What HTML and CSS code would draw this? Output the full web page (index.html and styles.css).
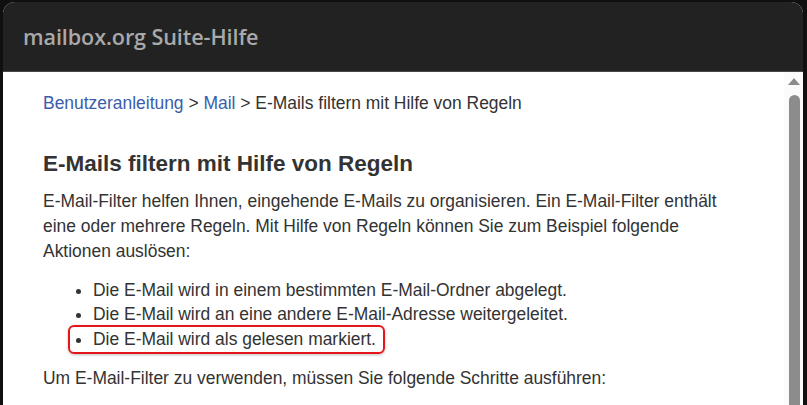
FILE: index.html
```html
<!DOCTYPE html>
<html lang="de">
<head>
<meta charset="utf-8">
<title>mailbox.org Suite-Hilfe</title>
<link rel="stylesheet" href="styles.css">
</head>
<body>
<div class="window">
  <header class="titlebar">mailbox.org Suite-Hilfe</header>
  <div class="body">
    <main class="content">
      <nav class="crumbs"><a href="#">Benutzeranleitung</a> &gt; <a href="#">Mail</a> &gt; E-Mails filtern mit Hilfe von Regeln</nav>
      <h1>E-Mails filtern mit Hilfe von Regeln</h1>
      <p>E-Mail-Filter helfen Ihnen, eingehende E-Mails zu organisieren. Ein E-Mail-Filter enthält eine oder mehrere Regeln. Mit Hilfe von Regeln können Sie zum Beispiel folgende Aktionen auslösen:</p>
      <ul>
        <li>Die E-Mail wird in einem bestimmten E-Mail-Ordner abgelegt.</li>
        <li>Die E-Mail wird an eine andere E-Mail-Adresse weitergeleitet.</li>
        <li class="marked">Die E-Mail wird als gelesen markiert.</li>
      </ul>
      <p>Um E-Mail-Filter zu verwenden, müssen Sie folgende Schritte ausführen:</p>
    </main>
    <div class="scrollbar">
      <div class="arrow"></div>
      <div class="thumb"></div>
    </div>
  </div>
</div>
</body>
</html>
```
FILE: styles.css
```css
html, body {
  margin: 0;
  padding: 0;
  height: 100%;
  overflow: hidden;
}
body {
  background: #101010;
}
.window {
  margin: 2px 0 0 3px;
  width: 800px;
  height: 403px;
  border-radius: 12px 12px 0 0;
  overflow: hidden;
  background: #fff;
  display: flex;
  flex-direction: column;
}
.titlebar {
  height: 69px;
  flex: none;
  background: #222222;
  border-bottom: 1px solid #474747;
  box-sizing: content-box;
  color: #a9a9a9;
  font-family: "Open Sans", "Noto Sans", sans-serif;
  font-weight: 600;
  font-size: 21.6px;
  line-height: 70px;
  padding-left: 20px;
  letter-spacing: -0.1px;
}
.body {
  flex: 1;
  display: flex;
  min-height: 0;
}
.content {
  flex: 1;
  padding: 21px 0 0 40px;
  font-family: "Liberation Sans", Arial, sans-serif;
  font-size: 17.45px;
  color: #333333;
}
.crumbs {
  line-height: 20px;
}
.crumbs a {
  color: #3b5dab;
  text-decoration: none;
}
h1 {
  margin: 38px 0 0 0;
  font-size: 22.5px;
  line-height: 26px;
  font-weight: bold;
  color: #333333;
}
p {
  margin: 11.5px 0 0 0;
  line-height: 25px;
  max-width: 700px;
}
ul {
  margin: 14px 0 0 0;
  padding-left: 50px;
  line-height: 24.5px;
}
ul li {
  position: relative;
}
li.marked::after {
  content: "";
  position: absolute;
  left: -25px;
  top: -2px;
  width: 317px;
  height: 29px;
  box-sizing: border-box;
  border: 2px solid #e5161b;
  border-radius: 6px;
  box-shadow: 0 1px 3px rgba(0,0,0,0.25);
}
ul + p {
  margin-top: 15px;
}
.scrollbar {
  width: 19px;
  flex: none;
  background: #fbfbfb;
  display: flex;
  flex-direction: column;
  align-items: center;
  padding-top: 6px;
  box-sizing: border-box;
}
.arrow {
  width: 0;
  height: 0;
  border-left: 6px solid transparent;
  border-right: 6px solid transparent;
  border-bottom: 7px solid #8c8c8c;
  margin-left: 1px;
}
.thumb {
  margin-top: 10px;
  margin-left: 1px;
  width: 11px;
  flex: 1;
  background: #8c8c8c;
  border-radius: 6px 6px 0 0;
}
```
